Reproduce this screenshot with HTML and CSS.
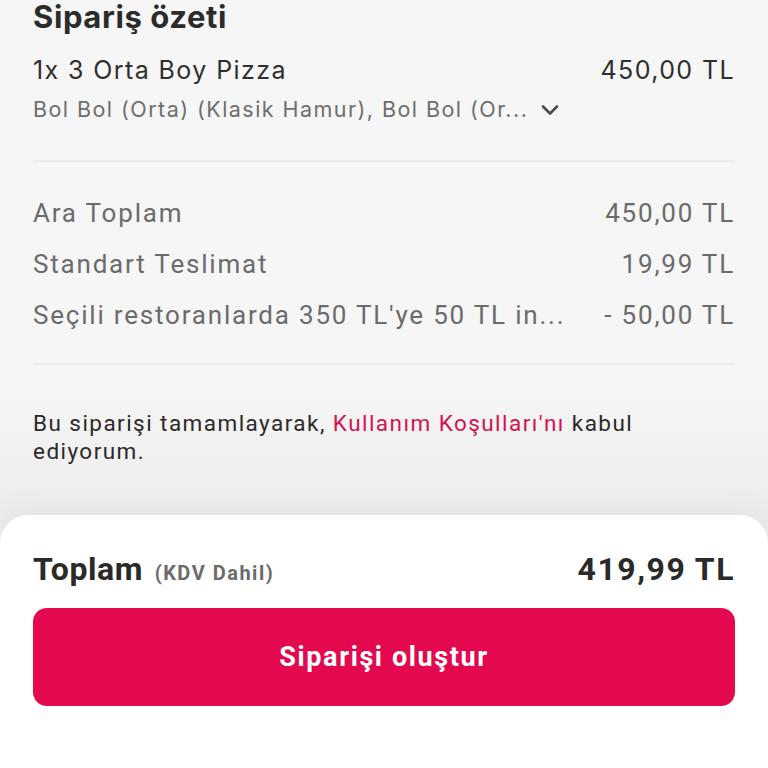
FILE: index.html
```html
<!DOCTYPE html>
<html lang="tr">
<head>
  <meta charset="UTF-8">
  <meta name="viewport" content="width=device-width, initial-scale=1.0">
  <title>Sipariş özeti</title>
  <link rel="stylesheet" href="styles.css">
</head>
<body>

  <div class="summary">
    <div class="title">Sipariş özeti</div>

    <div class="item">
      <div class="item-row">
        <span>1x 3 Orta Boy Pizza</span>
        <span>450,00 TL</span>
      </div>
      <div class="item-detail">
        <span>Bol Bol (Orta) (Klasik Hamur), Bol Bol (Or...</span>
        <svg class="chevron" width="18" height="12" viewBox="0 0 18 12">
          <path d="M2 2.5 L9 9.5 L16 2.5" fill="none" stroke="#4a4a4a" stroke-width="2.6" stroke-linecap="round" stroke-linejoin="round"/>
        </svg>
      </div>
    </div>

    <div class="costs">
      <div class="cost-row"><span>Ara Toplam</span><span>450,00 TL</span></div>
      <div class="cost-row"><span>Standart Teslimat</span><span>19,99 TL</span></div>
      <div class="cost-row"><span>Seçili restoranlarda 350 TL'ye 50 TL in...</span><span>- 50,00 TL</span></div>
    </div>

    <p class="terms">Bu siparişi tamamlayarak, <a href="#">Kullanım Koşulları'nı</a> kabul ediyorum.</p>
  </div>

  <div class="checkout">
    <div class="total-row">
      <div class="total-label">Toplam <small>(KDV Dahil)</small></div>
      <div class="total-value">419,99 TL</div>
    </div>
    <button class="order-button">Siparişi oluştur</button>
  </div>

</body>
</html>
```

FILE: styles.css
```css
body {
  margin: 0;
  padding: 0;
  background: linear-gradient(#f6f6f6 0, #f6f6f6 380px, #ececec 520px);
  font-family: Roboto, "Liberation Sans", sans-serif;
  color: #2a2a2a;
  height: 768px;
  overflow: hidden;
}

.summary {
  padding: 0 33px;
}

.title {
  font-family: Inter, Roboto, sans-serif;
  font-weight: 700;
  font-size: 31px;
  line-height: 34px;
  letter-spacing: 0.6px;
  color: #2b2b2b;
}

.item {
  padding-top: 21px;
  padding-bottom: 38px;
  border-bottom: 2px solid #ebebeb;
}

.item-row {
  display: flex;
  justify-content: space-between;
  font-family: Inter, Roboto, sans-serif;
  font-feature-settings: "calt" 0;
  font-size: 25px;
  line-height: 30px;
  letter-spacing: 1.4px;
  color: #2e2e2e;
}

.item-detail {
  display: flex;
  align-items: center;
  margin-top: 11px;
  font-family: Inter, Roboto, sans-serif;
  font-size: 21.5px;
  line-height: 26px;
  letter-spacing: 1.45px;
  color: #6e6e6e;
}

.chevron {
  margin-left: 13px;
  margin-top: 2px;
}

.costs {
  padding: 36px 0 33px;
  border-bottom: 2px solid #ebebeb;
}

.cost-row {
  display: flex;
  justify-content: space-between;
  font-size: 26px;
  line-height: 30px;
  letter-spacing: 1.8px;
  color: #6b6b6b;
  margin-bottom: 21px;
}

.cost-row:last-child {
  margin-bottom: 0;
}

.terms {
  margin: 44px 0 0;
  font-size: 22.5px;
  line-height: 28px;
  letter-spacing: 1.45px;
  color: #2a2a2a;
  padding-right: 80px;
}

.terms a {
  color: #d3134f;
  text-decoration: none;
}

.checkout {
  margin-top: 50px;
  background-color: #ffffff;
  border-radius: 28px 28px 0 0;
  padding: 34px 33px 0;
  height: 230px;
  box-shadow: 0 -8px 30px rgba(0, 0, 0, 0.04);
}

.total-row {
  display: flex;
  justify-content: space-between;
  align-items: baseline;
  line-height: 40px;
}

.total-label {
  font-weight: 700;
  font-size: 32px;
  letter-spacing: 0.6px;
  color: #2a2a2a;
}

.total-label small {
  font-size: 20px;
  letter-spacing: 1.5px;
  color: #6b6b6b;
  margin-left: 3px;
}

.total-value {
  font-weight: 700;
  font-size: 32px;
  letter-spacing: 1.5px;
  color: #2a2a2a;
}

.order-button {
  display: block;
  width: 100%;
  height: 98px;
  margin-top: 15px;
  background-color: #e4084e;
  color: white;
  border: none;
  border-radius: 14px;
  font-family: Roboto, sans-serif;
  font-weight: 700;
  font-size: 27px;
  letter-spacing: 1.6px;
  cursor: pointer;
}
```
